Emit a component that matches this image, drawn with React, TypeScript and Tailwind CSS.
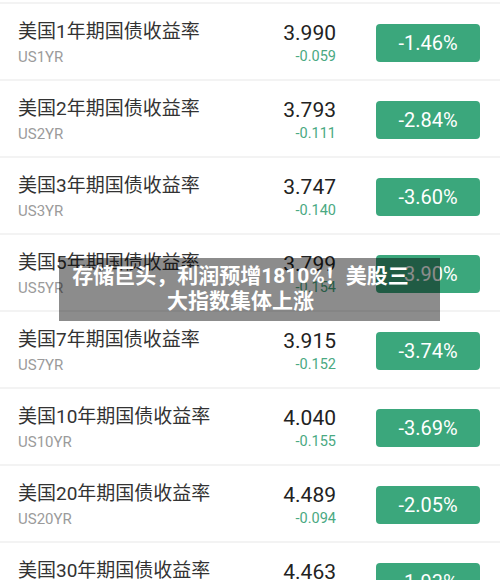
import React from 'react';

interface Bond {
  name: string;
  code: string;
  value: string;
  change: string;
  pct: string;
}

const bonds: Bond[] = [
  { name: '美国1年期国债收益率', code: 'US1YR', value: '3.990', change: '-0.059', pct: '-1.46%' },
  { name: '美国2年期国债收益率', code: 'US2YR', value: '3.793', change: '-0.111', pct: '-2.84%' },
  { name: '美国3年期国债收益率', code: 'US3YR', value: '3.747', change: '-0.140', pct: '-3.60%' },
  { name: '美国5年期国债收益率', code: 'US5YR', value: '3.799', change: '-0.154', pct: '-3.90%' },
  { name: '美国7年期国债收益率', code: 'US7YR', value: '3.915', change: '-0.152', pct: '-3.74%' },
  { name: '美国10年期国债收益率', code: 'US10YR', value: '4.040', change: '-0.155', pct: '-3.69%' },
  { name: '美国20年期国债收益率', code: 'US20YR', value: '4.489', change: '-0.094', pct: '-2.05%' },
  { name: '美国30年期国债收益率', code: 'US30YR', value: '4.463', change: '-0.088', pct: '-1.93%' },
];

const BondRow: React.FC<{ bond: Bond }> = ({ bond }) => (
  <div className="flex items-start h-[77px] shrink-0 pl-[18px] pr-[20px] border-b-2 border-[#f3f3f3]">
    <div className="flex flex-col pt-[16px]">
      <div className="text-[19px] leading-[24px] text-[#333]">{bond.name}</div>
      <div className="text-[15px] leading-[18px] text-[#9b9b9b] mt-[4px]">{bond.code}</div>
    </div>
    <div className="ml-auto flex flex-col items-end pt-[17px]">
      <div className="text-[21px] leading-[24px] text-[#222]">{bond.value}</div>
      <div className="text-[14.5px] leading-[18px] text-[#4aa982] mt-[3px]">{bond.change}</div>
    </div>
    <div className="ml-[40px] mt-[20px] w-[104px] h-[38px] rounded-[4px] bg-[#3ba77c] flex items-center justify-center text-white text-[20px]">
      {bond.pct}
    </div>
  </div>
);

export default function App() {
  return (
    <div
      className="relative w-[500px] h-[580px] overflow-hidden bg-white flex flex-col"
      style={{ fontFamily: 'Roboto, "Noto Sans CJK SC", sans-serif' }}
    >
      <div className="h-[4px] shrink-0 border-b-2 border-[#f3f3f3]" />
      {bonds.map((b) => (
        <BondRow key={b.code} bond={b} />
      ))}
      <div className="absolute left-[59px] top-[258px] w-[381px] h-[63px] bg-black/45 pl-[8px] pr-[26px] py-[6px] text-center text-white font-bold text-[21px] leading-[25px]">
        存储巨头，利润预增1810%！美股三
        <br />
        大指数集体上涨
      </div>
    </div>
  );
}
